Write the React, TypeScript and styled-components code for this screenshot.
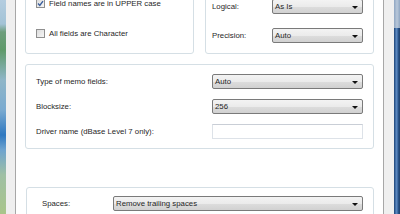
import React from 'react'
import styled, { createGlobalStyle } from 'styled-components'

const GlobalStyle = createGlobalStyle`
  html, body {
    margin: 0;
    padding: 0;
    background: #fff;
  }
  body {
    font-family: "Liberation Sans", Arial, sans-serif;
    font-size: 7.8px;
    color: #1f1f1f;
  }
`

const Window = styled.div`
  display: flex;
  width: 400px;
  height: 214px;
  overflow: hidden;
  background: #fff;
`

const DesktopEdge = styled.div`
  width: 6px;
  flex: none;
  background: linear-gradient(
    to bottom,
    #b4cde0 0px,
    #a3c3d6 24px,
    #6d9e7c 32px,
    #5f9a6a 50px,
    #8fb6c8 80px,
    #7aaad0 110px,
    #2f78c0 135px,
    #6fa4cf 150px,
    #9fc0a4 175px,
    #a9c58a 214px
  );
`

const FrameSide = styled.div<{ $side: 'left' | 'right' }>`
  flex: none;
  width: ${p => (p.$side === 'left' ? '9px' : '10px')};
  background: #efefef;
  ${p => (p.$side === 'left' ? 'border-right' : 'border-left')}: 1px solid #a7a7a7;
`

const OtherWindow = styled.div`
  flex: none;
  width: 6px;
  background: linear-gradient(to right, #24497a 0, #2c5891 1px, #5a86bd 2px, #5a86bd 3px, #2c5891 4px, #1d3e69 6px);
  position: relative;
  &::before {
    content: '';
    position: absolute;
    left: 0;
    right: 0;
    top: 0;
    height: 28px;
    background: linear-gradient(to right, #8fa6c2, #b9c8da, #8fa6c2);
  }
`

const Content = styled.div`
  flex: 1;
  display: flex;
  flex-direction: column;
  padding: 0 9px;
`

const TopRow = styled.div`
  display: grid;
  grid-template-columns: 169px 169px;
  column-gap: 11px;
  margin-top: -30px;
  height: 84px;
  flex: none;
`

const GroupBox = styled.div<{ $pt: number; $pl: number }>`
  border: 1px solid #d5dfe5;
  border-radius: 3px;
  padding: ${p => p.$pt}px 10px 0 ${p => p.$pl}px;
  box-sizing: border-box;
`

const CheckList = styled.div`
  display: grid;
  grid-auto-rows: 13px;
  row-gap: 17px;
`

const CheckRow = styled.label`
  display: flex;
  align-items: center;
  gap: 4px;
  white-space: nowrap;
`

const Box = styled.span`
  width: 9px;
  height: 9px;
  flex: none;
  box-sizing: border-box;
  border: 1px solid #8f8f8f;
  background: linear-gradient(135deg, #dcdcdc, #f6f6f6);
  display: flex;
  align-items: center;
  justify-content: center;
`

const FieldGrid = styled.div<{ $label: number; $gap: number }>`
  display: grid;
  grid-template-columns: ${p => p.$label}px 1fr;
  grid-auto-rows: 15px;
  row-gap: ${p => p.$gap}px;
  align-items: center;
`

const Label = styled.span`
  white-space: nowrap;
`

const Combo = styled.div`
  height: 15px;
  box-sizing: border-box;
  border: 1px solid #7a7a7a;
  border-radius: 2px;
  background: linear-gradient(to bottom, #f3f3f3 0%, #ebebeb 50%, #dddddd 51%, #d1d1d1 100%);
  display: flex;
  align-items: center;
  justify-content: space-between;
  padding: 0 4px 0 2px;
  white-space: nowrap;
`

const Arrow = styled.span`
  width: 0;
  height: 0;
  border-left: 3px solid transparent;
  border-right: 3px solid transparent;
  border-top: 3px solid #111;
  margin-top: 1px;
`

const TextBox = styled.div`
  height: 15px;
  box-sizing: border-box;
  border: 1px solid #dde2e8;
  border-top-color: #c9ced6;
  background: #fff;
`

const MemoBox = styled(GroupBox)`
  margin-top: 10px;
  height: 85px;
  flex: none;
`

const SpacesBox = styled(GroupBox)`
  margin-top: 38px;
  margin-left: 1px;
  height: 60px;
  flex: none;
`

function Check({ checked, children }: { checked?: boolean; children: React.ReactNode }) {
  return (
    <CheckRow>
      <Box>
        {checked && (
          <svg width="7" height="7" viewBox="0 0 7 7">
            <path d="M1 3.6 L2.8 5.4 L6 1.2" fill="none" stroke="#3a5e9c" strokeWidth="1.4" />
          </svg>
        )}
      </Box>
      {children}
    </CheckRow>
  )
}

function Select({ value }: { value: string }) {
  return (
    <Combo>
      <span>{value}</span>
      <Arrow />
    </Combo>
  )
}

export default function App() {
  return (
    <>
      <GlobalStyle />
      <Window>
        <DesktopEdge />
        <FrameSide $side="left" />
        <Content>
          <TopRow>
            <GroupBox $pt={26} $pl={10}>
              <CheckList>
                <Check checked>Field names are in UPPER case</Check>
                <Check>All fields are Character</Check>
              </CheckList>
            </GroupBox>
            <GroupBox $pt={28} $pl={6}>
              <FieldGrid $label={60} $gap={14}>
                <Label>Logical:</Label>
                <Select value="As Is" />
                <Label>Precision:</Label>
                <Select value="Auto" />
              </FieldGrid>
            </GroupBox>
          </TopRow>
          <MemoBox $pt={9} $pl={10}>
            <FieldGrid $label={176} $gap={10}>
              <Label>Type of memo fields:</Label>
              <Select value="Auto" />
              <Label>Blocksize:</Label>
              <Select value="256" />
              <Label>Driver name (dBase Level 7 only):</Label>
              <TextBox />
            </FieldGrid>
          </MemoBox>
          <SpacesBox $pt={8} $pl={15}>
            <FieldGrid $label={71} $gap={10}>
              <Label>Spaces:</Label>
              <Select value="Remove trailing spaces" />
            </FieldGrid>
          </SpacesBox>
        </Content>
        <FrameSide $side="right" />
        <OtherWindow />
      </Window>
    </>
  )
}
